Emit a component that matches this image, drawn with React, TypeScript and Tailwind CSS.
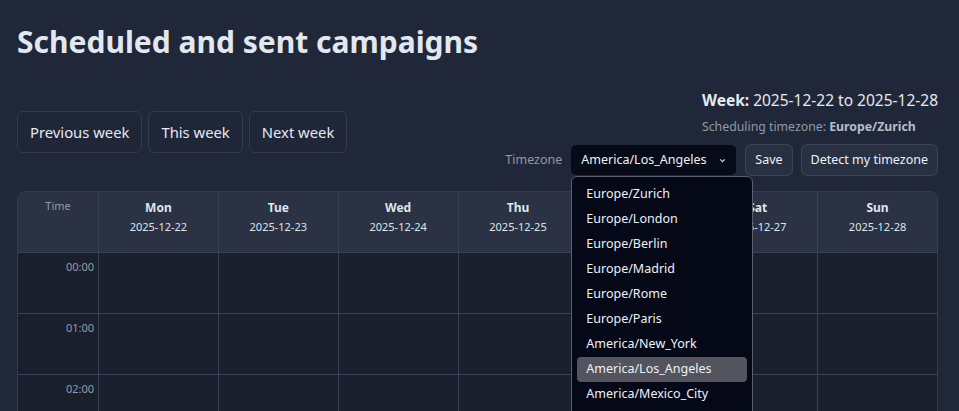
import React from "react";

const days = [
  ["Mon", "2025-12-22"],
  ["Tue", "2025-12-23"],
  ["Wed", "2025-12-24"],
  ["Thu", "2025-12-25"],
  ["Fri", "2025-12-26"],
  ["Sat", "2025-12-27"],
  ["Sun", "2025-12-28"],
];

const zones = [
  "Europe/Zurich",
  "Europe/London",
  "Europe/Berlin",
  "Europe/Madrid",
  "Europe/Rome",
  "Europe/Paris",
  "America/New_York",
  "America/Los_Angeles",
  "America/Mexico_City",
  "Asia/Tokyo",
];

const hours = ["00:00", "01:00", "02:00", "03:00"];

export default function App() {
  return (
    <div
      className="min-h-[411px] h-[411px] overflow-hidden bg-[#1f2738] text-[#e5e9f0] pl-[17px] pr-[21px]"
      style={{ fontFamily: '"Noto Sans", "Open Sans", sans-serif' }}
    >
      <h1 className="pt-[24px] text-[30px] leading-[36px] font-bold text-[#e2e8f0]">
        Scheduled and sent campaigns
      </h1>

      <div className="mt-[28px] flex items-center justify-between">
        <div className="flex gap-[6px]">
          {["Previous week", "This week", "Next week"].map((t) => (
            <button
              key={t}
              className="h-[42px] px-3 rounded-[6px] border border-[#323b4d] bg-[#1e2637] text-[14.8px] text-[#e5e9f0]"
            >
              {t}
            </button>
          ))}
        </div>
        <div className="flex flex-col items-end">
          <div className="flex flex-col items-start">
            <div className="text-[15.5px] leading-[24px] text-[#e5e9f0]">
              <span className="font-bold">Week:</span> 2025-12-22 to 2025-12-28
            </div>
            <div className="mt-[5px] text-[12.3px] leading-[20px] text-[#8f9aab]">
              Scheduling timezone: <span className="font-bold text-[#b4bdcb]">Europe/Zurich</span>
            </div>
          </div>
          <div className="mt-[7px] flex items-center gap-2 h-[32px]">
            <span className="text-[12.5px] text-[#8f9aab] mr-[1px]">Timezone</span>
            <div className="relative">
              <div className="h-[30px] w-[165px] rounded-[5px] bg-[#070b18] flex items-center justify-between pl-[10px] pr-[9px] text-[12.5px] text-[#eef1f6]">
                <span>America/Los_Angeles</span>
                <svg width="9" height="9" viewBox="0 0 10 10" className="text-[#c9cfd9]">
                  <path d="M2.5 3.8 L5 6.3 L7.5 3.8" fill="none" stroke="currentColor" strokeWidth="1.4" />
                </svg>
              </div>
              <div className="absolute left-0 top-[31px] z-10 w-[182px] h-[260px] rounded-t-[6px] border border-[#5a606d] bg-[#050816] p-[5px]">
                {zones.map((z) => (
                  <div
                    key={z}
                    className={`h-[25px] flex items-center px-[9px] rounded-[4px] text-[12.5px] text-[#eef1f6] ${
                      z === "America/Los_Angeles" ? "bg-[#53545e]" : ""
                    }`}
                  >
                    {z}
                  </div>
                ))}
              </div>
            </div>
            <button className="ml-[1px] h-[32px] px-[9px] rounded-[6px] border border-[#3a4354] bg-[#283142] text-[12.5px] text-[#eef1f6]">
              Save
            </button>
            <button className="h-[32px] px-[9px] rounded-[6px] border border-[#3a4354] bg-[#283142] text-[12.5px] text-[#eef1f6]">
              Detect my timezone
            </button>
          </div>
        </div>
      </div>

      <div className="mt-[15px] rounded-t-[8px] border border-[#343c4d] overflow-hidden">
        <div className="grid grid-cols-[80px_repeat(7,1fr)] bg-[#2a3243] h-[61px] border-b border-[#3a4253]">
          <div className="text-center text-[11px] text-[#8f9aab] pt-[6px]">Time</div>
          {days.map(([d, dt]) => (
            <div key={d} className="border-l border-[#3a4253] flex flex-col items-center pt-[7px]">
              <div className="text-[12px] font-bold leading-[17px] text-[#dfe5ee]">{d}</div>
              <div className="text-[11px] leading-[15px] mt-[3px] text-[#dfe5ee]">{dt}</div>
            </div>
          ))}
        </div>
        {hours.map((h) => (
          <div key={h} className="grid grid-cols-[80px_repeat(7,1fr)] bg-[#191f2d] h-[61px] border-b border-[#3a4253]">
            <div className="text-right pr-[4px] pt-[6px] text-[11px] text-[#949dab]">{h}</div>
            {days.map(([d]) => (
              <div key={d} className="border-l border-[#3a4253]" />
            ))}
          </div>
        ))}
      </div>
    </div>
  );
}
